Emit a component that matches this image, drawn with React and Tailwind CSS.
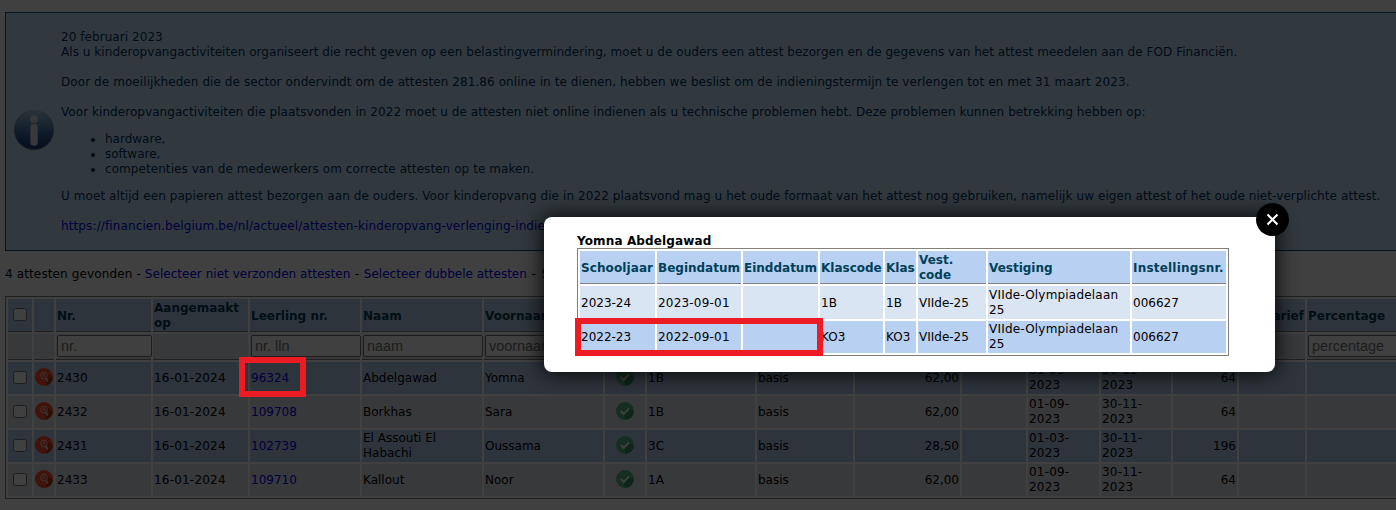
import React from "react";

const COLS = [24, 20, 95, 95, 110, 120, 119, 40, 108, 96, 105, 64, 71, 70, 64, 66, 142];

const HEADERS = ["Nr.", "Aangemaakt op", "Leerling nr.", "Naam", "Voornaam", "", "", "", "", "", "", "", "", "Dagtarief", "Percentage"];

const FILTERS = { 2: "nr.", 4: "nr. lln", 5: "naam", 6: "voornaam", 16: "percentage" };

const ROWS = [
  { nr: "2430", lln: "96324", naam: "Abdelgawad", voornaam: "Yomna", klas: "1B", bedrag: "62,00", van: "01-09-2023", tot: "30-11-2023", dagen: "64" },
  { nr: "2432", lln: "109708", naam: "Borkhas", voornaam: "Sara", klas: "1B", bedrag: "62,00", van: "01-09-2023", tot: "30-11-2023", dagen: "64" },
  { nr: "2431", lln: "102739", naam: "El Assouti El Habachi", voornaam: "Oussama", klas: "3C", bedrag: "28,50", van: "01-03-2023", tot: "30-11-2023", dagen: "196" },
  { nr: "2433", lln: "109710", naam: "Kallout", voornaam: "Noor", klas: "1A", bedrag: "62,00", van: "01-09-2023", tot: "30-11-2023", dagen: "64" },
];

const SCHOOL_COLS = [75, 84, 75, 63, 31, 68, 142, 94];
const SCHOOL_ROWS = [
  ["2023-24", "2023-09-01", "", "1B", "1B", "VIIde-25", "VIIde-Olympiadelaan 25", "006627"],
  ["2022-23", "2022-09-01", "", "KO3", "KO3", "VIIde-25", "VIIde-Olympiadelaan 25", "006627"],
];

function InfoIcon() {
  return (
    <svg className="block h-[42px] w-[42px]" viewBox="0 0 42 42">
      <defs>
        <linearGradient id="info" x1="0" y1="0" x2="0" y2="1">
          <stop offset="0" stopColor="#a8cce4" />
          <stop offset="0.35" stopColor="#6494bc" />
          <stop offset="0.7" stopColor="#2c5c94" />
          <stop offset="1" stopColor="#183468" />
        </linearGradient>
      </defs>
      <circle cx="21" cy="21.2" r="20" fill="#6c7c90" />
      <circle cx="21" cy="20.8" r="19.2" fill="url(#info)" />
      <circle cx="21" cy="10.2" r="3.9" fill="#dcdcdc" />
      <rect x="17.6" y="15" width="7" height="21.4" rx="3" fill="#e4e4e4" stroke="#c0d0e0" strokeWidth="0.6" />
    </svg>
  );
}

function PdfSearchIcon() {
  return (
    <svg className="block h-[18px] w-[18px]" viewBox="0 0 18 18">
      <defs>
        <clipPath id="disc"><circle cx="9" cy="9" r="9" /></clipPath>
      </defs>
      <circle cx="9" cy="9" r="9" fill="#ff5028" />
      <path d="M12 5 L18 10 V18 H11 L11 13Z" fill="#c03818" clipPath="url(#disc)" />
      <circle cx="9" cy="7.6" r="3.4" fill="none" stroke="#e8d8d4" strokeWidth="0.9" />
      <path d="M7.6 9 L9 5.8 L10.2 9" fill="none" stroke="#e8d8d4" strokeWidth="0.7" />
      <path d="M11.3 10.2 L12.3 13" stroke="#e8d8d4" strokeWidth="1.6" strokeLinecap="round" />
    </svg>
  );
}

function CheckIcon() {
  return (
    <svg className="block h-[18px] w-[18px]" viewBox="0 0 18 18">
      <defs>
        <clipPath id="ok"><circle cx="9" cy="9" r="9" /></clipPath>
      </defs>
      <circle cx="9" cy="9" r="9" fill="#58b888" />
      <path d="M13.4 5.6 L18 10 V18 H10 L7.5 12Z" fill="#3c9468" clipPath="url(#ok)" />
      <path d="M4.8 9 L7.8 12 L13.3 6.4" fill="none" stroke="#fff" strokeWidth="1.8" />
    </svg>
  );
}

function Checkbox() {
  return <span className="block h-[13px] w-[14px] rounded-[2.5px] border border-[#767676] bg-white" />;
}

function Notice() {
  return (
    <section className="flex h-[239px] w-[1450px] items-center border border-[#005088] bg-[#c4e4f8] text-[#003060]">
      <div className="mb-[3px] ml-[7px] shrink-0"><InfoIcon /></div>
      <div className="ml-[6px] h-full whitespace-nowrap pt-[17px]">
        <p className="tracking-[0.06px]">20 februari 2023</p>
        <p className="tracking-[0.052px]">Als u kinderopvangactiviteiten organiseert die recht geven op een belastingvermindering, moet u de ouders een attest bezorgen en de gegevens van het attest meedelen aan de FOD Financiën.</p>
        <p className="mt-[15px] tracking-[0.082px]">Door de moeilijkheden die de sector ondervindt om de attesten 281.86 online in te dienen, hebben we beslist om de indieningstermijn te verlengen tot en met 31 maart 2023.</p>
        <p className="mt-[15px] tracking-[0.062px]">Voor kinderopvangactiviteiten die plaatsvonden in 2022 moet u de attesten niet online indienen als u technische problemen hebt. Deze problemen kunnen betrekking hebben op:</p>
        <ul className="my-[12px] list-disc pl-[44px]">
          <li>hardware,</li>
          <li>software,</li>
          <li className="tracking-[0.068px]">competenties van de medewerkers om correcte attesten op te maken.</li>
        </ul>
        <p className="tracking-[0.084px]">U moet altijd een papieren attest bezorgen aan de ouders. Voor kinderopvang die in 2022 plaatsvond mag u het oude formaat van het attest nog gebruiken, namelijk uw eigen attest of het oude niet-verplichte attest.</p>
        <p className="mt-[15px] tracking-[0.118px] text-[#0000ee]">https://financien.belgium.be/nl/actueel/attesten-kinderopvang-verlenging-indie</p>
      </div>
    </section>
  );
}

function AttestTable() {
  return (
    <table className="mt-[14px] w-[1447px] table-fixed border-separate border-spacing-[2px] border border-[#808080] text-black">
      <colgroup>{COLS.map((w, i) => <col key={i} style={{ width: w }} />)}</colgroup>
      <thead>
        <tr className="h-[33px] bg-[#b8d0f0] text-left text-[#003c50]">
          <th className="border-b border-[#808080] p-0"><div className="ml-[5px] -mt-px"><Checkbox /></div></th>
          <th className="border-b border-[#808080] p-0" />
          {HEADERS.map((h, i) => (
            <th key={i} className="border-b border-[#808080] pb-0 pl-px pr-0 pt-[2px]">{h}</th>
          ))}
        </tr>
        <tr className="h-[26px] bg-[#e0e2ec]">
          {COLS.map((w, i) => (
            <td key={i} className="border-b border-[#808080] p-0">
              {FILTERS[i] && (
                <div className="relative -mt-px ml-px flex h-[22px] items-center rounded-[2px] border border-[#767676] bg-white pl-[3px] font-['Liberation_Sans',sans-serif] text-[14.4px] leading-[20px] text-[#757575]" style={{ width: w }}>
                  {FILTERS[i]}
                </div>
              )}
            </td>
          ))}
        </tr>
      </thead>
      <tbody>
        {ROWS.map((r, i) => (
          <tr key={r.nr} className={i % 2 ? "h-[32px] bg-[#e0e2ec]" : "h-[32px] bg-[#b8d0f0]"}>
            <td className="p-0"><div className="-mt-[2px] ml-[5px]"><Checkbox /></div></td>
            <td className="p-0"><div className="-mt-[3px] ml-px"><PdfSearchIcon /></div></td>
            <td className="p-px">{r.nr}</td>
            <td className="whitespace-nowrap p-px tracking-[0.2px]">16-01-2024</td>
            <td className="p-px text-[#0000ee]">{r.lln}</td>
            <td className="p-px">{r.naam}</td>
            <td className="p-px">{r.voornaam}</td>
            <td className="p-0"><div className="-mt-[3px] ml-[11px]"><CheckIcon /></div></td>
            <td className="p-px">{r.klas}</td>
            <td className="p-px">basis</td>
            <td className="p-px text-right">{r.bedrag}</td>
            <td />
            <td className="p-px tracking-[0.2px]">{r.van.slice(0, 6)}<br />{r.van.slice(6)}</td>
            <td className="p-px tracking-[0.2px]">{r.tot.slice(0, 6)}<br />{r.tot.slice(6)}</td>
            <td className="p-px text-right">{r.dagen}</td>
            <td />
            <td />
          </tr>
        ))}
      </tbody>
    </table>
  );
}

function SchoolModal() {
  const th = "border-b border-[#808080] pb-0 pl-px pr-0 pt-[2px]";
  return (
    <div className="absolute left-[544px] top-[217px] h-[155px] w-[731px] rounded-[8px] bg-white pl-[33px] pt-[17px] text-black shadow-[0_0_20px_2px_rgba(0,0,0,0.85)]">
      <h2 className="-mb-px font-bold tracking-[0.13px]">Yomna Abdelgawad</h2>
      <table className="w-[652px] table-fixed border-separate border-spacing-[2px] border border-[#808080]">
        <colgroup>{SCHOOL_COLS.map((w, i) => <col key={i} style={{ width: w }} />)}</colgroup>
        <thead>
          <tr className="h-[33px] bg-[#b8d0f2] text-left text-[#004058]">
            <th className={th}><span className="tracking-[0.1px]">Schooljaar</span></th>
            <th className={th}>Begindatum</th>
            <th className={th}>Einddatum</th>
            <th className={th}>Klascode</th>
            <th className={th}>Klas</th>
            <th className={th}>Vest.<br />code</th>
            <th className={th}>Vestiging</th>
            <th className={th}><span className="tracking-[0.2px]">Instellingsnr.</span></th>
          </tr>
        </thead>
        <tbody>
          {SCHOOL_ROWS.map((r, i) => (
            <tr key={i} className={i ? "h-[32px] bg-[#b8d0f2]" : "h-[33px] bg-[#dae5f3]"}>
              {r.map((c, j) => (
                <td key={j} className={`${i ? "py-px" : "pb-px pt-[2px]"} ${j === 1 || j === 6 ? "px-px tracking-[0.2px]" : "px-px"}`}>{c}</td>
              ))}
            </tr>
          ))}
        </tbody>
      </table>
      <button className="absolute -right-[14px] -top-[14px] flex h-[33px] w-[33px] items-center justify-center rounded-full bg-black" aria-label="Sluiten">
        <svg className="h-[13px] w-[13px]" viewBox="0 0 13 13">
          <path d="M1.5 1.5 L11.5 11.5 M11.5 1.5 L1.5 11.5" stroke="#fff" strokeWidth="2.1" />
        </svg>
      </button>
    </div>
  );
}

export default function App() {
  return (
    <div className="relative h-[510px] w-[1396px] overflow-hidden bg-white font-['DejaVu_Sans',Verdana,sans-serif] text-[12px] leading-[15px]">
      <main className="pl-[5px] pt-[12px]">
        <Notice />
        <p className="mt-[16px] whitespace-nowrap text-black">
          <span className="tracking-[0.13px]">4 attesten gevonden - </span>
          <a className="tracking-[0.03px] text-[#0000ee]">Selecteer niet verzonden attesten</a>
          <span className="tracking-[0.5px]"> - </span>
          <a className="text-[#0000ee]">Selecteer dubbele attesten</a>
          <span className="tracking-[0.9px]"> - </span>
          <a className="text-[#0000ee]">S</a>
        </p>
        <AttestTable />
      </main>
      <div className="absolute inset-0 bg-black/75" />
      <SchoolModal />
      <div className="absolute left-[239px] top-[357px] h-[40px] w-[67px] border-[6px] border-[#ed1c24]" />
      <div className="absolute left-[575px] top-[318px] h-[38px] w-[248px] border-[6px] border-[#ed1c24]" />
    </div>
  );
}
